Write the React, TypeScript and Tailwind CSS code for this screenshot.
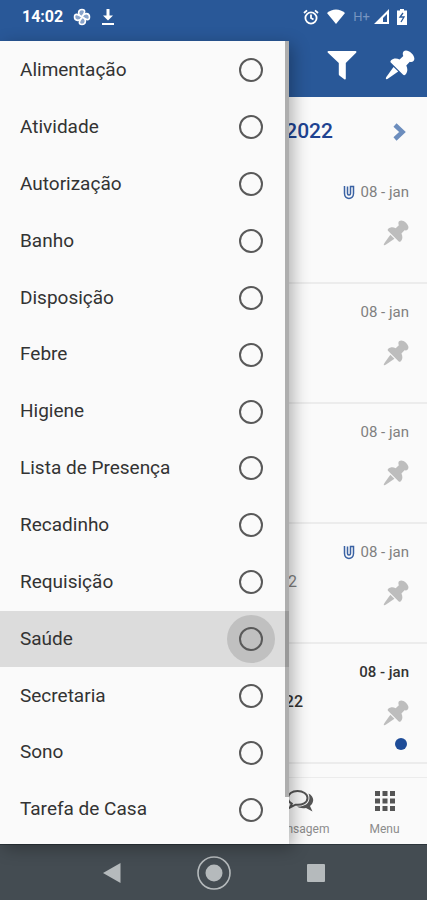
import clsx from "clsx"
import { useState } from "react"

const categories = [
  "Alimentação",
  "Atividade",
  "Autorização",
  "Banho",
  "Disposição",
  "Febre",
  "Higiene",
  "Lista de Presença",
  "Recadinho",
  "Requisição",
  "Saúde",
  "Secretaria",
  "Sono",
  "Tarefa de Casa",
]

type Entry = {
  id: number
  date: string
  year?: string
  attachment?: boolean
  unread?: boolean
}

const entries: Entry[] = [
  { id: 1, date: "08 - jan", attachment: true },
  { id: 2, date: "08 - jan" },
  { id: 3, date: "08 - jan" },
  { id: 4, date: "08 - jan", year: "2022", attachment: true },
  { id: 5, date: "08 - jan", year: "2022", unread: true },
]

function PinIcon({ className }: { className?: string }) {
  return (
    <svg viewBox="0 0 30 30" fill="currentColor" className={className} aria-hidden="true">
      <path d="M18.500 1.500C20.500-.3 23.800.7 26.500 3.300c2.800 2.700 3.700 5.900 2 7.700-1 1-2.300 1.200-3.700.8l-3.500 3.800c1.700 3.600 1.200 6.700-.8 8.900-.8.900-1.800.9-2.600.1L6 12.800c-.8-.8-.8-1.800.1-2.600 2.200-2 5.300-2.300 8.500-.8l3.700-3.300c-.7-1.700-.8-3.500.2-4.600z" />
      <path d="M8.500 17l4.700 4.500L3.500 28.300C1 30 0 29 1.700 26.500z" />
    </svg>
  )
}

function ClipIcon() {
  return (
    <svg viewBox="0 0 12 15" className="h-[15px] w-3" fill="none" stroke="#3a62a3" strokeWidth="1.5" aria-hidden="true">
      <path d="M1.500 1v7.500c0 6.500 9 6.500 9 0V1.500H7.500V8.500c0 2-3 2-3 0V1.500" />
    </svg>
  )
}

function StatusBar() {
  return (
    <header className="flex h-[41px] items-center justify-between bg-[#295898] pr-5 pb-2 pl-[22px] text-white">
      <div className="flex items-center gap-2.5">
        <span className="text-base font-bold">14:02</span>
        <svg viewBox="0 0 18 18" className="size-[18px]" fill="#89a4cb" stroke="currentColor" strokeWidth="1.6" aria-hidden="true">
          <path d="M9 9C4 7 5 1.500 9 1.500S12 5 9 9z" />
          <path d="M9 9c2-5 7.500-4 7.500 0S13 12 9 9z" />
          <path d="M9 9c5 2 4 7.500 0 7.500S6 13 9 9z" />
          <path d="M9 9c-2 5-7.500 4-7.500 0S5 6 9 9z" />
        </svg>
        <svg viewBox="0 0 14 18" className="h-[18px] w-3.5" fill="currentColor" aria-hidden="true">
          <path d="M5.500 1h3v6.500H12l-5 5-5-5h3.500zM1 15h12v2H1z" />
        </svg>
      </div>
      <div className="flex items-center gap-2">
        <svg viewBox="0 0 16 16" className="size-4" fill="none" stroke="currentColor" strokeWidth="1.8" aria-hidden="true">
          <circle cx="8" cy="9" r="5.600" />
          <path d="M8 5.500V9l2.500 1.500M1 4l3-2.700M15 4l-3-2.700" />
        </svg>
        <svg viewBox="0 0 18 15" className="h-[15px] w-[18px]" fill="currentColor" aria-hidden="true">
          <path d="M9 15L0 4C5-.8 13-.8 18 4z" />
        </svg>
        <div className="flex items-center gap-1">
          <span className="text-[13px] leading-4 text-[#7795c1]">H+</span>
          <svg viewBox="0 0 15 15" className="size-[15px]" aria-hidden="true">
            <path fill="currentColor" fillRule="evenodd" d="M15 0v15H0zM13 5l-4 4v4h4z" />
          </svg>
        </div>
        <svg viewBox="0 0 10 16" className="h-4 w-2.5" aria-hidden="true">
          <path fill="currentColor" d="M3 0h4v1.500h3V16H0V1.500h3z" />
          <path fill="none" stroke="#295898" strokeWidth="1.300" d="M6 4L3 8h4l-3 5" />
        </svg>
      </div>
    </header>
  )
}

function EntryRow({ entry }: { entry: Entry }) {
  return (
    <li className="flex h-[120px] flex-col items-end border-b-2 border-[#ececec] px-[18px] pt-[18px]">
      <div
        className={clsx(
          "flex items-center gap-1.5 text-[15px] leading-5",
          entry.unread ? "font-medium text-[#333]" : "text-[#808080]"
        )}
      >
        {entry.attachment && <ClipIcon />}
        <time>{entry.date}</time>
      </div>
      <div className="mt-2.5 flex w-full items-start justify-end">
        {entry.year && (
          <span
            className={clsx(
              "text-base leading-5",
              entry.unread ? "mr-20 font-medium text-[#333]" : "mr-[86px] text-[#808080]"
            )}
          >
            {entry.year}
          </span>
        )}
        <button aria-label="Fixar" className="pt-2 text-[#bdbdbd]">
          <PinIcon className="size-[26px]" />
        </button>
      </div>
      {entry.unread && <span className="mt-3 mr-0.5 size-3 shrink-0 rounded-full bg-[#1e4c98]" />}
    </li>
  )
}

function FilterDrawer() {
  const [selected, setSelected] = useState("")

  return (
    <aside className="absolute inset-y-0 left-0 flex w-[289px] flex-col bg-[#fafafa] pt-px pb-1.5 shadow-[4px_4px_16px_rgba(0,0,0,0.3)]">
      {categories.map(name => (
        <label
          key={name}
          className={clsx(
            "flex flex-1 cursor-pointer items-center justify-between pr-3.5 pl-5 text-[19px] text-[#333]",
            name === "Saúde" && "bg-[#dcdcdc]"
          )}
        >
          {name}
          <span
            className={clsx(
              "flex size-12 items-center justify-center rounded-full",
              name === "Saúde" && "bg-[#c0c0c0]"
            )}
          >
            <input
              type="radio"
              name="category"
              checked={selected === name}
              onChange={() => setSelected(name)}
              className="size-6 appearance-none rounded-full border-2 border-[#595959] checked:border-[7px]"
            />
          </span>
        </label>
      ))}
      <div className="absolute top-0 right-0 bottom-[47px] w-1 bg-black/30" />
    </aside>
  )
}

export default function App() {
  return (
    <div className="flex min-h-screen flex-col bg-[#fafafa] font-[Roboto,sans-serif]">
      <StatusBar />

      <main className="relative flex flex-1 flex-col">
        <div className="flex h-14 items-center justify-end gap-7 bg-[#295898] pr-3 pb-2 text-white">
          <button aria-label="Filtrar">
            <svg viewBox="0 0 30 30" className="size-[30px]" fill="currentColor" aria-hidden="true">
              <path d="M1.500 1h27c1 0 1.200 1 .6 1.700L18.800 13v15.500c0 1-.8 1.200-1.500.7L13 26c-.8-.600-1.200-1-1.200-2V13L.9 2.700C.3 2 .5 1 1.500 1z" />
            </svg>
          </button>
          <button aria-label="Fixados">
            <PinIcon className="size-[30px]" />
          </button>
        </div>

        <div className="flex h-[67px] items-center justify-end gap-[60px] pt-0.5 pr-5 text-[#1e4391]">
          <span className="text-[21px] font-medium">2022</span>
          <button aria-label="Próximo">
            <svg viewBox="0 0 14 18" className="h-[18px] w-3.5" fill="none" stroke="#6c8dbd" strokeWidth="4.500" aria-hidden="true">
              <path d="M2 2l7.500 7L2 16" />
            </svg>
          </button>
        </div>

        <ul className="flex-1">
          {entries.map(entry => (
            <EntryRow key={entry.id} entry={entry} />
          ))}
        </ul>

        <nav className="flex h-[67px] items-center justify-end border-t border-[#ececec] pt-1 text-xs text-[#8c8c8c]">
          <button className="flex w-[85px] flex-col items-center gap-2">
            <svg viewBox="0 0 28 24" className="h-6 w-7" fill="none" stroke="#555" strokeWidth="2" aria-hidden="true">
              <path d="M11.500 2C6 2 2 5 2 9c0 2.500 1.500 4.500 3.800 5.700L4 18.500l5.500-2.800c7 .8 12-2.200 12-6.700 0-4-4.500-7-10-7z" />
              <path fill="#555" stroke="none" d="M22.500 4.500c6 3 6 9 1.500 12.500l2.500 5.500-6.500-3.500c-4 .5-7 0-9-1.500 8 .500 15-4 11.500-13z" />
            </svg>
            Mensagem
          </button>
          <button className="flex w-[85px] flex-col items-center gap-2">
            <svg viewBox="0 0 20 24" className="h-6 w-5" fill="#555" aria-hidden="true">
              <path d="M0 2h5v5H0zM7.500 2h5v5h-5zM15 2h5v5h-5zM0 9.500h5v5H0zM7.500 9.500h5v5h-5zM15 9.500h5v5h-5zM0 17h5v5H0zM7.500 17h5v5h-5zM15 17h5v5h-5z" />
            </svg>
            Menu
          </button>
        </nav>

        <FilterDrawer />
      </main>

      <footer className="flex h-14 items-center justify-center gap-[76px] border-t border-[#2c353b] bg-[#444c52] text-[#b5babc]">
        <button aria-label="Voltar">
          <svg viewBox="0 0 18 20" className="h-5 w-[18px]" fill="currentColor" aria-hidden="true">
            <path d="M17.500 0v20L0 10z" />
          </svg>
        </button>
        <button aria-label="Início">
          <svg viewBox="0 0 34 34" className="size-[34px]" aria-hidden="true">
            <circle cx="17" cy="17" r="16" fill="none" stroke="currentColor" strokeWidth="1.600" />
            <circle cx="17" cy="17" r="8.500" fill="currentColor" />
          </svg>
        </button>
        <button aria-label="Recentes">
          <svg viewBox="0 0 18 18" className="size-[18px]" fill="currentColor" aria-hidden="true">
            <rect width="18" height="18" rx="1" />
          </svg>
        </button>
      </footer>
    </div>
  )
}
